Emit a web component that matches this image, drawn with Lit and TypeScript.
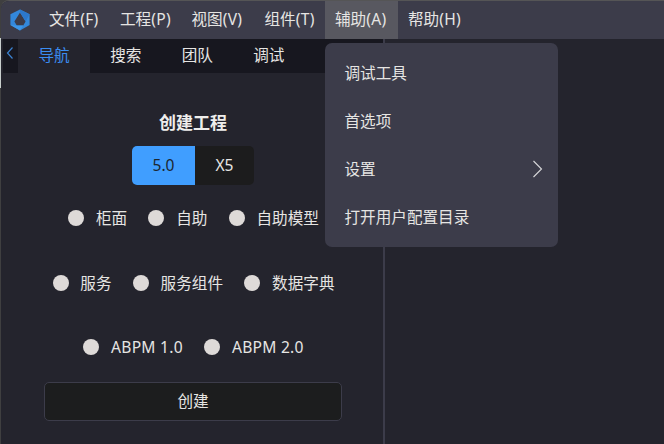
import { LitElement, html, css, svg } from "lit";
import { customElement } from "lit/decorators.js";
import { classMap } from "lit/directives/class-map.js";

const MENUS = [
  { label: "文件", key: "(F)", width: 71 },
  { label: "工程", key: "(P)", width: 71.5 },
  { label: "视图", key: "(V)", width: 73 },
  { label: "组件", key: "(T)", width: 70.5 },
  { label: "辅助", key: "(A)", width: 73, open: true },
  { label: "帮助", key: "(H)", width: 74 },
];
const TABS = ["导航", "搜索", "团队", "调试"];
const ACTIONS = ["调试工具", "首选项", "设置", "打开用户配置目录"];
const KINDS = [
  ["柜面", "自助", "自助模型"],
  ["服务", "服务组件", "数据字典"],
  ["ABPM 1.0", "ABPM 2.0"],
];

const logo = svg`
  <path fill="#3388dc" fill-rule="evenodd" d="M10 0.4 L19.6 5.2 V16 L10 21.4 L0.4 16 V5.2 Z M10 3.6 L4.4 12.6 L6.8 16.6 H13.2 L15.6 12.6 Z"/>
  <path fill="#2c78cc" d="M10 0.4 L19.6 5.2 L15.6 12.6 L10 3.6 Z"/>
  <path fill="#3d97ea" d="M0.4 16 L6.8 16.6 H13.2 L10 21.4 Z"/>`;

@customElement("app-root")
export class AppRoot extends LitElement {
  static styles = css`
    :host {
      display: block;
      box-sizing: border-box;
      width: 664px;
      height: 444px;
      position: relative;
      overflow: hidden;
      background: #3f3f40;
      font: 15.6px/20px "Noto Sans", "Noto Sans CJK SC", sans-serif;
      color: #e6e5e3;
      white-space: nowrap;
    }
    .edge {
      position: absolute;
      left: 0;
      top: 38px;
      width: 1px;
      height: 50px;
      background: #c9cfcd;
    }
    .window {
      box-sizing: border-box;
      height: 444px;
      margin-left: 1px;
      border-top: 1px solid #555556;
      border-radius: 8px 0 0 0;
      background: #24242d;
      overflow: hidden;
      display: flex;
      flex-direction: column;
    }
    .bar {
      height: 38px;
      flex: none;
      display: flex;
      background: #3c3c4a;
    }
    .logo {
      width: 20px;
      height: 22px;
      margin: 7.5px 9.5px 0 8.5px;
      flex: none;
    }
    .menu {
      box-sizing: border-box;
      flex: none;
      padding: 8px 0 0 10px;
    }
    .menu.open { background: #585860; }
    .key { letter-spacing: 0.3px; }
    .body { flex: 1; display: flex; }
    .side {
      width: 380px;
      margin-left: 2px;
      border-right: 2px solid #3c3c4a;
    }
    .tabs {
      height: 34px;
      display: flex;
      background: #17171f;
    }
    .collapse { width: 15px; height: 34px; flex: none; }
    .tab {
      box-sizing: border-box;
      width: 72px;
      padding-top: 6px;
      text-align: center;
    }
    .tab.on { background: #24242d; color: #3b8df2; }
    .tab + .tab { width: 71.5px; }
    .form {
      display: flex;
      flex-direction: column;
      align-items: center;
      padding-top: 40px;
    }
    .title {
      font-size: 17px;
      font-weight: 700;
      height: 33px;
      line-height: 20px;
      color: #efeeec;
    }
    .seg {
      display: flex;
      height: 39px;
      line-height: 38px;
      text-align: center;
      border-radius: 5px;
      overflow: hidden;
      background: #1c1c1d;
    }
    .s1 { width: 63px; background: #409eff; color: #1c2730; }
    .s2 { width: 59px; }
    .kinds {
      display: grid;
      grid-auto-rows: 64.5px;
      margin-top: 1px;
      justify-items: center;
    }
    .row { display: flex; gap: 21.3px; align-items: center; padding-left: 1px; }
    .kind { display: flex; gap: 11.8px; align-items: center; }
    .dot { width: 16px; height: 16px; border-radius: 50%; background: #dedad8; }
    .latin { letter-spacing: 0.25px; }
    .create {
      box-sizing: border-box;
      width: 298px;
      height: 39px;
      margin-top: 2.5px;
      line-height: 37px;
      text-align: center;
      border: 1px solid #3c3c4a;
      border-radius: 5px;
      background: #1c1d1e;
    }
    .popup {
      position: absolute;
      left: 325px;
      top: 43px;
      width: 233px;
      height: 204px;
      box-sizing: border-box;
      padding: 6px 15px 6px 19.5px;
      border-radius: 7px;
      background: #3c3c4a;
    }
    .action {
      display: flex;
      height: 48px;
      align-items: center;
      justify-content: space-between;
    }
    .arrow { width: 12px; height: 18px; }
  `;

  render() {
    return html`
      <div class="edge"></div>
      <div class="window">
        <div class="bar">
          <svg class="logo" viewBox="0 0 20 22">${logo}</svg>
          ${MENUS.map(
            (m) => html`<div class=${classMap({ menu: true, open: !!m.open })} style="width:${m.width}px">${m.label}<span class="key">${m.key}</span></div>`
          )}
        </div>
        <div class="body">
          <div class="side">
            <div class="tabs">
              <svg class="collapse" viewBox="0 0 15 34">
                <path d="M9.5 8.5 L4.5 14 L9.5 19.5" fill="none" stroke="#3b82d0" stroke-width="1.2" />
              </svg>
              ${TABS.map((t, i) => html`<div class=${classMap({ tab: true, on: i === 0 })}>${t}</div>`)}
            </div>
            <div class="form">
              <div class="title">创建工程</div>
              <div class="seg"><div class="s1">5.0</div><div class="s2">X5</div></div>
              <div class="kinds">
                ${KINDS.map(
                  (row, i) => html`<div class="row">
                    ${row.map((k) => html`<div class="kind"><span class="dot"></span><span class=${classMap({ latin: i === 2 })}>${k}</span></div>`)}
                  </div>`
                )}
              </div>
              <div class="create">创建</div>
            </div>
          </div>
        </div>
      </div>
      <div class="popup">
        ${ACTIONS.map(
          (a, i) => html`<div class="action"><span>${a}</span>${i === 2
            ? html`<svg class="arrow" viewBox="0 0 12 18"><path d="M2.5 1 L10.5 9 L2.5 17" fill="none" stroke="#d8d8da" stroke-width="1.1" /></svg>`
            : ""}</div>`
        )}
      </div>
    `;
  }
}
